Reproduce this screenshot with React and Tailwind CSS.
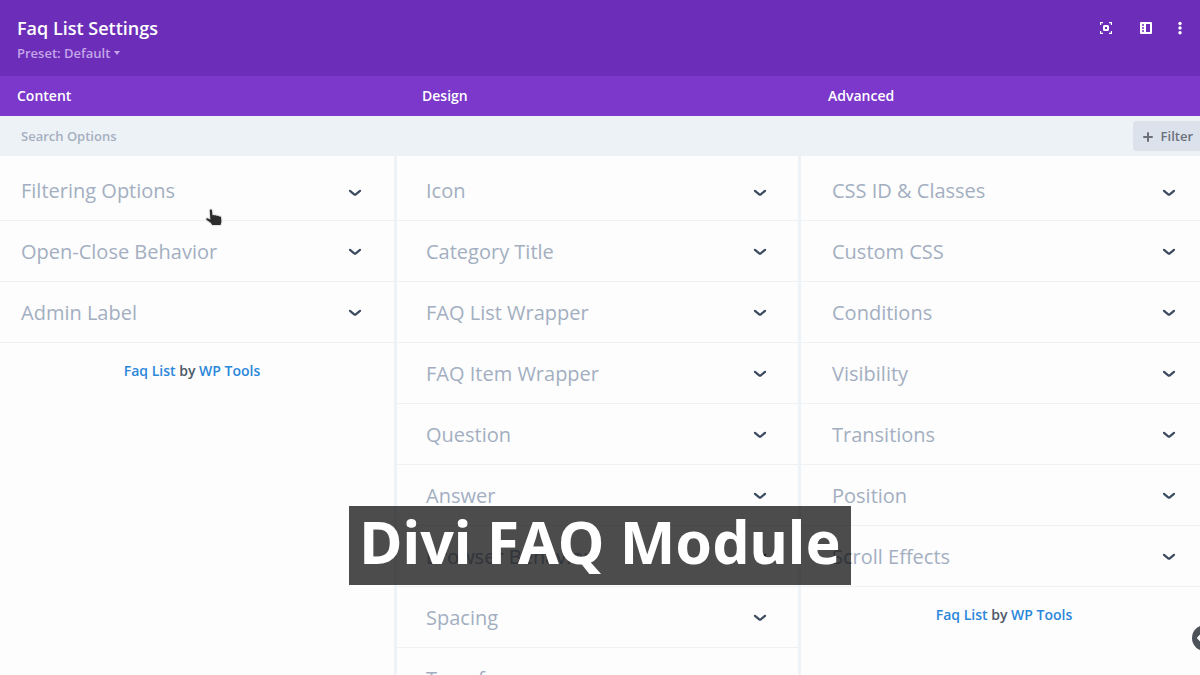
import React from 'react';

const tabs = ['Content', 'Design', 'Advanced'];

const content = ['Filtering Options', 'Open-Close Behavior', 'Admin Label'];
const design = [
  'Icon',
  'Category Title',
  'FAQ List Wrapper',
  'FAQ Item Wrapper',
  'Question',
  'Answer',
  'Browser Behavior',
  'Spacing',
  'Transform',
];
const advanced = [
  'CSS ID & Classes',
  'Custom CSS',
  'Conditions',
  'Visibility',
  'Transitions',
  'Position',
  'Scroll Effects',
];

function Chevron() {
  return (
    <svg width="14" height="8" viewBox="0 0 14 8" fill="none" stroke="#3b4a5f" strokeWidth="2.2" strokeLinecap="round" strokeLinejoin="round" aria-hidden="true">
      <path d="M2 1.8L6.2 5.3Q7 5.9 7.8 5.3L12 1.8" />
    </svg>
  );
}

function Group({ label, first }) {
  return (
    <button
      type="button"
      className={`flex w-full items-center justify-between border-b border-[#eff1f3] text-left text-xl text-[#a3afc1] ${first ? 'h-[65px] pt-[6px] [&>svg]:mt-[3px]' : 'h-[61px] pt-[2px]'}`}
    >
      <span>{label}</span>
      <Chevron />
    </button>
  );
}

function Column({ items, className, children }) {
  return (
    <section className={className}>
      {items.map((label, i) => (
        <Group key={label} label={label} first={i === 0} />
      ))}
      {children}
    </section>
  );
}

function Credit() {
  return (
    <p className="pt-[18px] text-center text-sm font-semibold text-[#4c5866]">
      <a href="#faq-list" className="text-[#2b87da]">Faq List</a> by{' '}
      <a href="#wp-tools" className="text-[#2b87da]">WP Tools</a>
    </p>
  );
}

export default function App() {
  return (
    <div className="relative flex h-screen flex-col overflow-hidden bg-[#fdfdfd] font-['Open_Sans',sans-serif]">
      <header className="flex h-[76px] shrink-0 justify-between bg-[#6c2eb9] pl-[17px] pr-[18px] pt-4 text-white">
        <div>
          <h1 className="text-lg font-semibold leading-6">Faq List Settings</h1>
          <button type="button" className="mt-[3px] flex items-center gap-1 text-[13px] font-semibold leading-5 text-[#c4a5e8]">
            Preset: Default
            <svg width="6" height="4" viewBox="0 0 6 4" fill="currentColor" aria-hidden="true">
              <path d="M0 0h6L3 4z" />
            </svg>
          </button>
        </div>
        <div className="flex h-6 items-center">
          <button type="button" aria-label="Expand modal" className="mr-7">
            <svg width="12" height="12" viewBox="0 0 12 12" fill="none" stroke="currentColor" aria-hidden="true">
              <path d="M.6 3V.6H3M9 .6h2.4V3M11.4 9v2.4H9M3 11.4H.6V9" strokeWidth="1.2" />
              <rect x="4" y="4" width="4" height="4" rx=".5" strokeWidth="2" />
            </svg>
          </button>
          <button type="button" aria-label="Snap to side" className="mr-[26px]">
            <svg width="12" height="12" viewBox="0 0 12 12" aria-hidden="true">
              <path fill="currentColor" fillRule="evenodd" d="M1 0h10a1 1 0 0 1 1 1v10a1 1 0 0 1-1 1H1a1 1 0 0 1-1-1V1a1 1 0 0 1 1-1zM6 2v8h4V2zM2 2.3v1.4h2V2.3zM2 5.3v1.4h2V5.3zM2 8.3v1.4h2V8.3z" />
            </svg>
          </button>
          <button type="button" aria-label="More options">
            <svg width="4" height="14" viewBox="0 0 4 14" fill="currentColor" aria-hidden="true">
              <circle cx="2" cy="2.5" r="1.7" />
              <circle cx="2" cy="7" r="1.7" />
              <circle cx="2" cy="11.8" r="1.7" />
            </svg>
          </button>
        </div>
      </header>

      <nav className="grid h-10 shrink-0 grid-cols-[405fr_406fr_389fr] bg-[#7b38cb] text-sm font-semibold text-white">
        {tabs.map((tab) => (
          <button key={tab} type="button" className="pl-[17px] text-left">
            {tab}
          </button>
        ))}
      </nav>

      <div className="flex h-10 shrink-0 items-center bg-[#edf2f6] pl-[21px]">
        <input
          type="text"
          aria-label="Search options"
          placeholder="Search Options"
          className="min-w-0 flex-1 bg-transparent pt-[2px] text-[13px] font-semibold text-[#a5afc0] outline-none placeholder:text-[#a5afc0]"
        />
        <button type="button" className="flex h-[30px] items-center gap-2 rounded-l-[3px] bg-[#dce2ec] pl-[10px] pr-[7px] pt-px text-[13px] font-semibold text-[#6b7079]">
          <svg width="10" height="10" viewBox="0 0 10 10" stroke="currentColor" strokeWidth="2" strokeLinecap="round" aria-hidden="true">
            <path d="M5 1v8M1 5h8" />
          </svg>
          Filter
        </button>
      </div>

      <main className="grid min-h-0 flex-1 grid-cols-[397fr_404fr_399fr]">
        <Column items={content} className="border-r-[3px] border-[#eef3f8] [&>button]:pl-[21px] [&>button]:pr-8">
          <div className="pr-[10px]">
            <Credit />
          </div>
        </Column>
        <Column items={design} className="border-r-[3px] border-[#eef3f8] [&>button]:pl-[29px] [&>button]:pr-[31px]" />
        <Column items={advanced} className="[&>button]:pl-[31px] [&>button]:pr-6">
          <div className="pl-[7px]">
            <Credit />
          </div>
        </Column>
      </main>

      <svg className="absolute left-[205px] top-[208px]" width="20" height="22" viewBox="0 0 20 22" aria-hidden="true">
        <path
          d="M4.8 2.4c0-1.3 2.1-1.3 2.2 0l.5 5.1c.5-.6 1.7-.6 2.2.1.6-.5 1.8-.4 2.2.4.7-.4 1.9-.2 2.2.6.8-.3 2 .1 2 1.2l.3 4-.9 3.2H7.3l-1.6-2.2-4-2.8c-1-.9.1-2.2 1.2-1.6l2.4 1.2z"
          fill="#2c2c2c"
          stroke="#e4e4e4"
          strokeWidth="2.4"
          strokeLinejoin="round"
          paintOrder="stroke"
        />
      </svg>

      <div className="absolute left-1/2 top-[506px] flex h-[79px] w-[502px] -translate-x-1/2 items-start justify-center whitespace-nowrap bg-black/70 text-white">
        <h2 className="font-['Noto_Sans',sans-serif] text-[59px] font-bold leading-[70px]">Divi FAQ Module</h2>
      </div>

      <button type="button" aria-label="Previous" className="absolute -right-[18px] top-[625px] flex size-[26px] items-center rounded-full bg-[#4c5258] pl-[5px] text-white">
        <svg width="12" height="12" viewBox="0 0 12 12" fill="none" stroke="currentColor" strokeWidth="2.5" aria-hidden="true">
          <path d="M6 1L1.5 6L6 11M2 6h9" />
        </svg>
      </button>
    </div>
  );
}
